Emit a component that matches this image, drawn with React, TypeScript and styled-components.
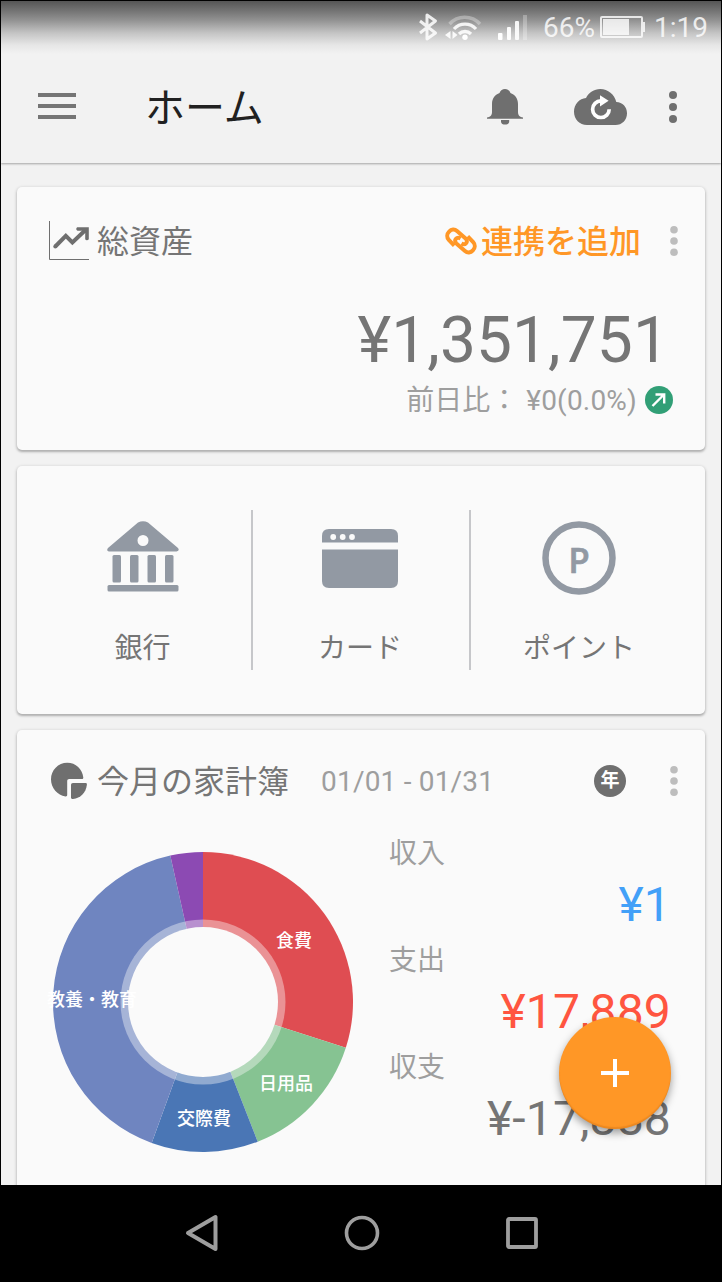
import React from "react";
import styled, { createGlobalStyle } from "styled-components";

const GlobalStyle = createGlobalStyle`
  * { box-sizing: border-box; }
  body {
    margin: 0;
    background: #000;
    font-family: Roboto, "Noto Sans CJK JP", sans-serif;
    color: #757575;
  }
  svg { display: block; flex: none; }
`;

const Screen = styled.div`
  position: relative;
  display: flex;
  flex-direction: column;
  width: 722px;
  height: 1282px;
  border: 1px solid #000;
  background: #f2f2f2;
  overflow: hidden;
`;

const TopArea = styled.header`
  flex: none;
  height: 162px;
  background: linear-gradient(#555 0, #717171 9px, #919191 19px, #c4c4c4 32px, #e6e6e6 44px, #f2f2f2 53px);
  box-shadow: 0 1px 2px rgba(0, 0, 0, 0.32);
`;

const StatusBar = styled.div`
  display: flex;
  justify-content: flex-end;
  height: 50px;
  padding: 11px 13px 0 0;
`;

const StatusText = styled.span`
  font-size: 28px;
  line-height: 32px;
  color: rgba(255, 255, 255, 0.82);
`;

const AppBar = styled.div`
  display: flex;
  align-items: center;
  height: 112px;
  padding: 0 44px 0 37px;
`;

const MenuSvg = styled.svg`
  margin-bottom: 2px;
`;

const AppTitle = styled.h1`
  flex: 1;
  margin: 0 0 0 69px;
  padding-top: 4px;
  font-size: 40px;
  font-weight: 400;
  line-height: 56px;
  color: #212121;
`;

const AppActions = styled.div`
  display: flex;
  align-items: center;
`;

const Content = styled.main`
  flex: 1;
  min-height: 0;
  overflow: hidden;
  display: flex;
  flex-direction: column;
  gap: 16px;
  padding: 24px 16px 0;
`;

const Card = styled.section<{ $height: number }>`
  flex: none;
  height: ${(p) => p.$height}px;
  border-radius: 5px;
  background: #fafafa;
  box-shadow: 0 1px 3px 1px rgba(0, 0, 0, 0.14), 0 2px 2px rgba(0, 0, 0, 0.16);
`;

const CardHeader = styled.div<{ $top: number }>`
  display: flex;
  align-items: center;
  height: 48px;
  margin-top: ${(p) => p.$top}px;
  padding: 0 27px 0 32px;
`;

const CardTitle = styled.h2`
  margin: 0 0 0 8px;
  padding-top: 3px;
  font-size: 32px;
  font-weight: 400;
  line-height: 45px;
  white-space: nowrap;
`;

const Period = styled.span`
  margin-left: 32px;
  padding-top: 2px;
  font-size: 28px;
  line-height: 46px;
  letter-spacing: 0.2px;
  color: #9e9e9e;
  white-space: nowrap;
`;

const YearBadge = styled.span`
  display: flex;
  align-items: center;
  justify-content: center;
  width: 32px;
  height: 32px;
  margin-left: auto;
  border-radius: 50%;
  background: #6f6f6f;
  color: #fff;
  font-size: 19px;
  font-weight: 700;
  line-height: 32px;
`;

const LinkAction = styled.a`
  display: flex;
  align-items: center;
  gap: 4px;
  margin-left: auto;
  color: #ff9726;
`;

const LinkLabel = styled.span`
  padding-top: 3px;
  font-size: 32px;
  font-weight: 500;
  line-height: 45px;
`;

const TotalAmount = styled.div`
  margin-top: 38px;
  padding-right: 36px;
  text-align: right;
  font-size: 64px;
  line-height: 75px;
  letter-spacing: 0.1px;
`;

const DailyChange = styled.div`
  display: flex;
  justify-content: flex-end;
  align-items: center;
  height: 44px;
  padding-right: 32px;
  font-size: 28px;
  line-height: 44px;
  color: #9e9e9e;
`;

const ChangeAmount = styled.span`
  margin: 0 8px 0 8px;
  padding-top: 2px;
  letter-spacing: 0.2px;
`;

const DailyLabel = styled.span`
  padding-top: 2px;
`;

const Shortcuts = styled.div`
  display: grid;
  grid-template-columns: 218px 2px 216px 2px 216px;
  height: 160px;
  margin: 0 16px;
`;

const ShortcutCard = styled(Card)`
  padding-top: 44px;
`;

const Shortcut = styled.div<{ $shift?: number }>`
  display: flex;
  flex-direction: column;
  align-items: center;
  padding-left: ${(p) => Math.max(p.$shift || 0, 0)}px;
  padding-right: ${(p) => Math.max(-(p.$shift || 0), 0)}px;
`;

const ShortcutIcon = styled.div<{ $lift?: number }>`
  display: flex;
  align-items: center;
  height: 96px;
  padding-bottom: ${(p) => p.$lift || 0}px;
`;

const ShortcutLabel = styled.span`
  margin-top: 23px;
  font-size: 28px;
  line-height: 40px;
  white-space: nowrap;
`;

const Divider = styled.i`
  background: #c6c7ca;
`;

const BudgetBody = styled.div`
  display: flex;
  padding: 0 32px 0 34px;
`;

const DonutSvg = styled.svg`
  margin-top: 45px;
  overflow: visible;
`;

const Summary = styled.dl`
  flex: 1;
  margin: 29px 0 0 34px;
`;

const SummaryLabel = styled.dt`
  height: 40px;
  font-size: 28px;
  line-height: 40px;
  color: #9e9e9e;
`;

const SummaryValue = styled.dd<{ $color: string }>`
  height: 67px;
  margin: 0;
  padding-right: 2px;
  text-align: right;
  font-size: 48px;
  line-height: 62px;
  letter-spacing: 0.15px;
  color: ${(p) => p.$color};
`;

const AddButton = styled.button`
  position: absolute;
  right: 50px;
  bottom: 152px;
  display: flex;
  align-items: center;
  justify-content: center;
  width: 112px;
  height: 112px;
  padding: 0;
  border: 0;
  border-radius: 50%;
  background: #ff9726;
  box-shadow: 0 4px 9px rgba(0, 0, 0, 0.38), inset 0 -2px 1px rgba(200, 110, 20, 0.35);
`;

const NavBar = styled.nav`
  flex: none;
  display: flex;
  justify-content: center;
  height: 96px;
  padding-left: 2px;
  background: #000;
`;

const NavItem = styled.div`
  display: flex;
  align-items: center;
  justify-content: center;
  width: 160px;
`;

const MoreSvg = styled.svg<{ $gap: number }>`
  margin-left: ${(p) => p.$gap}px;
`;

const More = ({ gap, large }: { gap: number; large?: boolean }) => {
  const step = large ? 12 : 11.2;
  return (
    <MoreSvg $gap={gap} width="8" height="34" viewBox="0 0 8 34" fill={large ? "#6f6f6f" : "#bdbdbd"}>
      {[-1, 0, 1].map((n) => (
        <circle key={n} cx="4" cy={17 + n * step} r={large ? 4 : 3.8} />
      ))}
    </MoreSvg>
  );
};

const StatusIcons = () => (
  <svg width="110" height="32" viewBox="417 11 110 32" fill="none">
    <path d="M420 20L435.500 32L427 38V14L435.500 20L420 32" stroke="#fff" strokeOpacity=".85" strokeWidth="3" strokeLinejoin="round" />
    <path d="M449.500 23A20.500 20.500 0 0 1 480 23" stroke="#fff" strokeOpacity=".32" strokeWidth="3.400" />
    <path d="M454 28A15 15 0 0 1 476 28M459 33A8.500 8.500 0 0 1 471 33" stroke="#fff" strokeOpacity=".88" strokeWidth="3.300" />
    <circle cx="465" cy="36.300" r="2.700" fill="#fff" />
    <path d="M450.500 30V38L445 34ZM452.500 30V38L457.500 34Z" fill="#fff" fillOpacity=".9" />
    <rect x="498" y="32" width="4.500" height="7" rx="1" fill="#fff" />
    <rect x="507" y="26" width="4" height="13" rx="1" fill="#fff" fillOpacity=".95" />
    <rect x="515" y="20" width="4" height="19" rx="1" fill="#fff" fillOpacity=".9" />
    <rect x="523" y="14" width="4" height="25" fill="#fff" fillOpacity=".28" />
  </svg>
);

const StatusGap = styled.i<{ $w: number }>`
  width: ${(p) => p.$w}px;
`;

const Battery = () => (
  <svg width="46" height="32" viewBox="600 11 46 32" fill="none">
    <rect x="601" y="16" width="41" height="20" rx="1" stroke="#fff" strokeOpacity=".8" strokeWidth="2" />
    <rect x="603" y="18" width="26" height="16" fill="#fff" fillOpacity=".8" />
    <rect x="643" y="21" width="2" height="10" fill="#fff" fillOpacity=".8" />
  </svg>
);

const Bell = () => (
  <svg width="36" height="37" viewBox="487 89 36 37" fill="#6f6f6f">
    <path d="M487 118.700V117.600C490 117 492 115.500 492 112V104C492 98 495.500 94.500 499.500 93C500.500 90.500 502.500 89 505 89S509.500 90.500 510.500 93C514.500 94.500 518 98 518 104V112C518 115.500 520 117 523 117.600V118.700Z" />
    <path d="M501 120H509.200V121.500C509.200 123.800 507 124.600 505 124.600S501 123.800 501 121.500Z" />
  </svg>
);

const CloudSvg = styled.svg`
  margin-left: 51px;
`;

const CloudSync = () => (
  <CloudSvg width="53" height="37" viewBox="574 89 53 37" fill="none">
    <path d="M587 125C579.500 125 574 119 574 111.700C574 104.500 579.500 98.300 586 98C588.800 92.500 594 89 600.300 89C608 89 614.500 94.500 616.300 102C622.500 102 627 107 627 113.200C627 120 622 125 615.500 125Z" fill="#6f6f6f" />
    <path d="M609.200 109.200A8.300 8.300 0 1 1 600.900 100.900" stroke="#fff" strokeWidth="3.700" />
    <path d="M600 95.300L608.600 100.800L600 106.500Z" fill="#fff" />
  </CloudSvg>
);

const TrendIcon = () => (
  <svg width="40" height="40" viewBox="49 221 40 40" fill="none" stroke="#6f6f6f">
    <path d="M49.500 221V259.500H89" strokeWidth="1" />
    <path d="M55.300 246.500L65.800 235.800L72.400 242.400L86 229.500" strokeWidth="4" strokeLinejoin="miter" />
    <path d="M55.300 246.500h.02" strokeWidth="4" strokeLinecap="round" />
    <path d="M77.200 227.200H88.800V239.200C88 240.500 85.800 240.500 85.200 239.200V233L82.500 230.800H77.500C75.800 230 76 228 77.200 227.200Z" fill="#6f6f6f" stroke="none" />
  </svg>
);

const chainHook =
  "M454.500 245L449 239.200C446.800 236.800 446.900 233.400 449.300 231C451.600 228.500 454.800 228.300 457.200 230.400L465.800 238C467.400 239.500 467.500 241.500 466.200 242.700C465 243.900 463.400 243.900 461.600 242.900";

const ChainIcon = () => (
  <svg width="32" height="30" viewBox="445.200 225.400 32 30" fill="none" stroke="currentColor" strokeWidth="4">
    <path d={chainHook} />
    <path d={chainHook} transform="rotate(180 461.200 240.400)" />
  </svg>
);

const PieIcon = () => (
  <svg width="40" height="40" viewBox="49 761 40 40" fill="#6f6f6f">
    <path d="M82 779C83 779 83.400 778.300 83.300 777.500C82.500 769 75.800 762.700 67.200 762.700C58.200 762.700 51 770.200 51 779.300C51 788 57.500 795.500 65.500 796.400C66.600 796.500 67.200 796 67.200 795V781C67.200 779.700 68 779 69.200 779Z" />
    <path d="M73 783H85.500C86.600 783 87 783.600 86.900 784.700C86 792.500 80.500 798 73 799C71.800 799.100 71 798.500 71 797.500V785C71 783.700 71.700 783 73 783Z" />
  </svg>
);

const UpCircle = () => (
  <svg width="28" height="28" viewBox="0 0 28 28" fill="none">
    <circle cx="14" cy="14" r="14" fill="#319f76" />
    <path d="M7.500 20L18.500 9M10.500 8.500H19.200V17.500" stroke="#fff" strokeWidth="2.400" />
  </svg>
);

const SLATE = "#9299a3";

const BankIcon = () => (
  <svg width="72" height="71" viewBox="0 0 72 71" fill={SLATE}>
    <path fillRule="evenodd" d="M31 1.500Q36 -1 41 1.500L71 27Q73 30 69.500 30.500H2Q-1 30 1 27ZM36 14A5.500 5.500 0 1 0 36 25A5.500 5.500 0 1 0 36 14Z" />
    {[5.5, 23, 40.5, 58].map((x) => (
      <rect key={x} x={x} y="34" width="8.500" height="27.500" rx="1.500" />
    ))}
    <rect x="0.500" y="64" width="71" height="6.500" rx="1.500" />
  </svg>
);

const CardIcon = () => (
  <svg width="76" height="59" viewBox="0 0 76 59" fill={SLATE}>
    <path d="M0 13.500V7Q0 0 7 0H69Q76 0 76 7V13.500Z" />
    <path d="M0 20.500H76V52Q76 59 69 59H7Q0 59 0 52Z" />
    {[11.2, 20.7, 30].map((x) => (
      <circle key={x} cx={x} cy="8" r="2.900" fill="#fafafa" />
    ))}
  </svg>
);

const PointIcon = () => (
  <svg width="74" height="74" viewBox="0 0 74 74">
    <circle cx="37" cy="37" r="33.500" fill="none" stroke={SLATE} strokeWidth="6.500" />
    <text x="26.300" y="51.600" fontFamily="Open Sans" fontWeight="600" fontSize="35" fill={SLATE} stroke={SLATE} strokeWidth=".6">
      P
    </text>
  </svg>
);

const slices = [
  { from: 0, to: 107.8, color: "#df4d52" },
  { from: 107.8, to: 158.6, color: "#86c392" },
  { from: 158.6, to: 200, color: "#4a76b5" },
  { from: 200, to: 347.4, color: "#6f85c0" },
  { from: 347.4, to: 360, color: "#8c4ab3" },
];

const sliceLabels = [
  { text: "食費", x: 241, y: 95 },
  { text: "日用品", x: 233, y: 238 },
  { text: "交際費", x: 151, y: 273 },
  { text: "教養・教育", x: 39, y: 154 },
];

const polar = (deg: number) => {
  const a = (deg * Math.PI) / 180;
  return `${150 + 150 * Math.sin(a)} ${150 - 150 * Math.cos(a)}`;
};

const Donut = () => (
  <DonutSvg width="304" height="304" viewBox="-2 -2 304 304">
    {slices.map((s) => (
      <path
        key={s.color}
        fill={s.color}
        d={`M150 150L${polar(s.from)}A150 150 0 ${s.to - s.from > 180 ? 1 : 0} 1 ${polar(s.to)}Z`}
      />
    ))}
    <circle cx="150" cy="150" r="82.500" fill="#fafafa" fillOpacity=".4" />
    <circle cx="150" cy="150" r="75" fill="#fafafa" />
    {sliceLabels.map((l) => (
      <text key={l.text} x={l.x} y={l.y} textAnchor="middle" fontSize="18" fontWeight="500" fill="#fff">
        {l.text}
      </text>
    ))}
  </DonutSvg>
);

const summary = [
  { label: "収入", value: "¥1", color: "#42a0f8" },
  { label: "支出", value: "¥17,889", color: "#ff5540" },
  { label: "収支", value: "¥-17,888", color: "#757575" },
];

export default function App() {
  return (
    <>
      <GlobalStyle />
      <Screen>
        <TopArea>
          <StatusBar>
            <StatusIcons />
            <StatusGap $w={16} />
            <StatusText>66%</StatusText>
            <StatusGap $w={5} />
            <Battery />
            <StatusGap $w={8} />
            <StatusText>1:19</StatusText>
          </StatusBar>
          <AppBar>
            <MenuSvg width="38" height="26" viewBox="0 0 38 26" fill="#757575">
              <path d="M0 0H38V4H0ZM0 11H38V15H0ZM0 22H38V26H0Z" />
            </MenuSvg>
            <AppTitle>ホーム</AppTitle>
            <AppActions>
              <Bell />
              <CloudSync />
              <More gap={42} large />
            </AppActions>
          </AppBar>
        </TopArea>

        <Content>
          <Card $height={263}>
            <CardHeader $top={30}>
              <TrendIcon />
              <CardTitle>総資産</CardTitle>
              <LinkAction>
                <ChainIcon />
                <LinkLabel>連携を追加</LinkLabel>
              </LinkAction>
              <More gap={29} />
            </CardHeader>
            <TotalAmount>¥1,351,751</TotalAmount>
            <DailyChange>
              <DailyLabel>前日比：</DailyLabel>
              <ChangeAmount>¥0(0.0%)</ChangeAmount>
              <UpCircle />
            </DailyChange>
          </Card>

          <ShortcutCard $height={248}>
            <Shortcuts>
              <Shortcut $shift={1}>
                <ShortcutIcon $lift={4}><BankIcon /></ShortcutIcon>
                <ShortcutLabel>銀行</ShortcutLabel>
              </Shortcut>
              <Divider />
              <Shortcut $shift={-2}>
                <ShortcutIcon><CardIcon /></ShortcutIcon>
                <ShortcutLabel>カード</ShortcutLabel>
              </Shortcut>
              <Divider />
              <Shortcut>
                <ShortcutIcon><PointIcon /></ShortcutIcon>
                <ShortcutLabel>ポイント</ShortcutLabel>
              </Shortcut>
            </Shortcuts>
          </ShortcutCard>

          <Card $height={480}>
            <CardHeader $top={27}>
              <PieIcon />
              <CardTitle>今月の家計簿</CardTitle>
              <Period>01/01 - 01/31</Period>
              <YearBadge>年</YearBadge>
              <More gap={44} />
            </CardHeader>
            <BudgetBody>
              <Donut />
              <Summary>
                {summary.map((row) => (
                  <React.Fragment key={row.label}>
                    <SummaryLabel>{row.label}</SummaryLabel>
                    <SummaryValue $color={row.color}>{row.value}</SummaryValue>
                  </React.Fragment>
                ))}
              </Summary>
            </BudgetBody>
          </Card>
        </Content>

        <AddButton aria-label="追加">
          <svg width="28" height="28" viewBox="0 0 28 28" fill="#fff">
            <path d="M12 0H16V12H28V16H16V28H12V16H0V12H12Z" />
          </svg>
        </AddButton>

        <NavBar>
          <NavItem>
            <svg width="36" height="38" viewBox="0 0 36 38" fill="none" stroke="#9e9e9e" strokeWidth="4" strokeLinejoin="round">
              <path d="M4 19L31.500 3V35Z" />
            </svg>
          </NavItem>
          <NavItem>
            <svg width="36" height="36" viewBox="0 0 36 36" fill="none" stroke="#9e9e9e" strokeWidth="3.600">
              <circle cx="18" cy="18" r="15.500" />
            </svg>
          </NavItem>
          <NavItem>
            <svg width="32" height="32" viewBox="0 0 32 32" fill="none" stroke="#9e9e9e" strokeWidth="3.800" strokeLinejoin="round">
              <rect x="2" y="2" width="28" height="28" rx="1" />
            </svg>
          </NavItem>
        </NavBar>
      </Screen>
    </>
  );
}
